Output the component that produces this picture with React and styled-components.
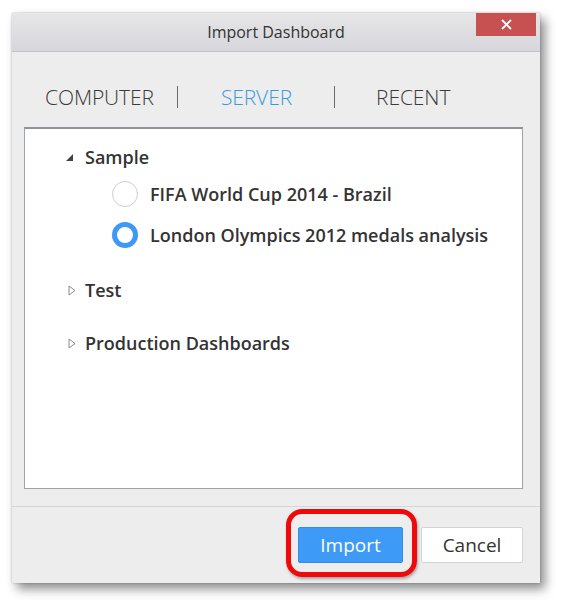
import React, { useState } from 'react';
import styled, { createGlobalStyle } from 'styled-components';

const GlobalStyle = createGlobalStyle`
    html, body {
        margin: 0;
        padding: 0;
        background: #ffffff;
    }
    body {
        font-family: "Open Sans", "Noto Sans", sans-serif;
        color: #333;
    }
`;

const Page = styled.div`
    width: 561px;
    height: 605px;
    padding: 13px 0 0 12px;
    box-sizing: border-box;
`;

const Window = styled.div`
    width: 528px;
    height: 570px;
    background: #ededed;
    display: flex;
    flex-direction: column;
    box-shadow: 5px 6px 10px rgba(0, 0, 0, 0.45), 0 0 2px rgba(0, 0, 0, 0.25);
`;

const TitleBar = styled.div`
    position: relative;
    height: 38px;
    flex: none;
    display: flex;
    align-items: center;
    justify-content: center;
    background: linear-gradient(#e6e5e8, #d7d6da);
    border-bottom: 1px solid #c2c2c4;
    font-size: 16px;
    color: #333;
`;

const CloseButton = styled.button`
    position: absolute;
    top: 0;
    right: 4px;
    width: 60px;
    height: 23px;
    border: none;
    padding: 0;
    background: #c75050;
    display: flex;
    align-items: center;
    justify-content: center;
    cursor: pointer;
`;

const Body = styled.div`
    flex: 1;
    display: flex;
    flex-direction: column;
    padding: 0 17px 17px 12px;
`;

const Tabs = styled.div`
    height: 75px;
    display: flex;
    align-items: center;
    padding: 14px 0 0 21px;
    box-sizing: border-box;
`;

const Tab = styled.span`
    font-size: 21px;
    font-weight: 300;
    letter-spacing: -0.1px;
    color: ${p => (p.$active ? '#3a9bdc' : '#3a3a3a')};
    cursor: pointer;
`;

const Separator = styled.span`
    width: 1px;
    height: 22px;
    background: #6a6a6a;
    margin: 0 ${p => p.$right}px 0 ${p => p.$left}px;
`;

const TreeBox = styled.div`
    flex: 1;
    background: #ffffff;
    border: 1px solid #9ea2a9;
    border-top: 2px solid #8d9199;
    padding: 15px 0 0 40px;
`;

const NodeRow = styled.div`
    display: flex;
    align-items: center;
    height: 26px;
    margin-bottom: ${p => p.$after || 0}px;
    font-size: 18px;
    font-weight: 600;
    color: #333;
`;

const Arrow = styled.span`
    width: 20px;
    display: flex;
    align-items: center;
    padding-left: ${p => p.$indent || 0}px;
    box-sizing: border-box;
`;

const Children = styled.div`
    padding: 11px 0 29px 47px;
    display: flex;
    flex-direction: column;
    gap: 15px;
`;

const Radio = styled.span`
    width: 26px;
    height: 26px;
    border-radius: 50%;
    box-sizing: border-box;
    background: #fff;
    border: ${p => (p.$checked ? '5px solid #3d98f7' : '1px solid #cfcfcf')};
    margin-right: 12px;
    flex: none;
`;

const Footer = styled.div`
    height: 75px;
    flex: none;
    border-top: 1px solid #d5d5d5;
    display: flex;
    align-items: center;
    justify-content: flex-end;
    gap: 18px;
    padding: 0 17px 1px 0;
`;

const Highlight = styled.div`
    position: relative;
    display: flex;

    &::before {
        content: '';
        position: absolute;
        left: -12px;
        right: -14px;
        top: -18px;
        bottom: -14px;
        border: 5px solid #ee0a0a;
        border-radius: 16px;
        box-shadow: 1px 2px 3px rgba(0, 0, 0, 0.3);
        pointer-events: none;
    }
`;

const Button = styled.button`
    height: 36px;
    width: ${p => p.$width}px;
    box-sizing: border-box;
    font-family: "Open Sans", sans-serif;
    font-size: 19px;
    border-radius: 2px;
    cursor: pointer;
    background: ${p => (p.$primary ? '#3e9af7' : '#ffffff')};
    color: ${p => (p.$primary ? '#ffffff' : '#333')};
    border: 1px solid ${p => (p.$primary ? '#338be6' : '#d3d3d3')};
`;

const Expanded = () => (
    <svg width="9" height="9" viewBox="0 0 9 9">
        <path d="M8 1 L8 8 L1 8 Z" fill="#444" />
    </svg>
);

const Collapsed = () => (
    <svg width="8" height="11" viewBox="0 0 8 11">
        <path d="M1 1 L7 5.5 L1 10 Z" fill="none" stroke="#8a8a8a" strokeWidth="1" />
    </svg>
);

const dashboards = [
    { id: 'fifa', name: 'FIFA World Cup 2014 - Brazil' },
    { id: 'london', name: 'London Olympics 2012 medals analysis' },
];

const App = () => {
    const [selected, setSelected] = useState('london');

    return (
        <Page>
            <GlobalStyle />
            <Window>
                <TitleBar>
                    Import Dashboard
                    <CloseButton>
                        <svg width="11" height="11" viewBox="0 0 11 11">
                            <path d="M1 1 L10 10 M10 1 L1 10" stroke="#fff" strokeWidth="1.8" />
                        </svg>
                    </CloseButton>
                </TitleBar>
                <Body>
                    <Tabs>
                        <Tab>COMPUTER</Tab>
                        <Separator $left={23} $right={43} />
                        <Tab $active>SERVER</Tab>
                        <Separator $left={42} $right={41} />
                        <Tab>RECENT</Tab>
                    </Tabs>
                    <TreeBox>
                        <NodeRow>
                            <Arrow><Expanded /></Arrow>
                            Sample
                        </NodeRow>
                        <Children>
                            {dashboards.map(d => (
                                <NodeRow key={d.id} onClick={() => setSelected(d.id)}>
                                    <Radio $checked={selected === d.id} />
                                    {d.name}
                                </NodeRow>
                            ))}
                        </Children>
                        <NodeRow $after={27}>
                            <Arrow $indent={3}><Collapsed /></Arrow>
                            Test
                        </NodeRow>
                        <NodeRow>
                            <Arrow $indent={3}><Collapsed /></Arrow>
                            Production Dashboards
                        </NodeRow>
                    </TreeBox>
                </Body>
                <Footer>
                    <Highlight>
                        <Button $primary $width={105}>Import</Button>
                    </Highlight>
                    <Button $width={102}>Cancel</Button>
                </Footer>
            </Window>
        </Page>
    );
};

export default App;
